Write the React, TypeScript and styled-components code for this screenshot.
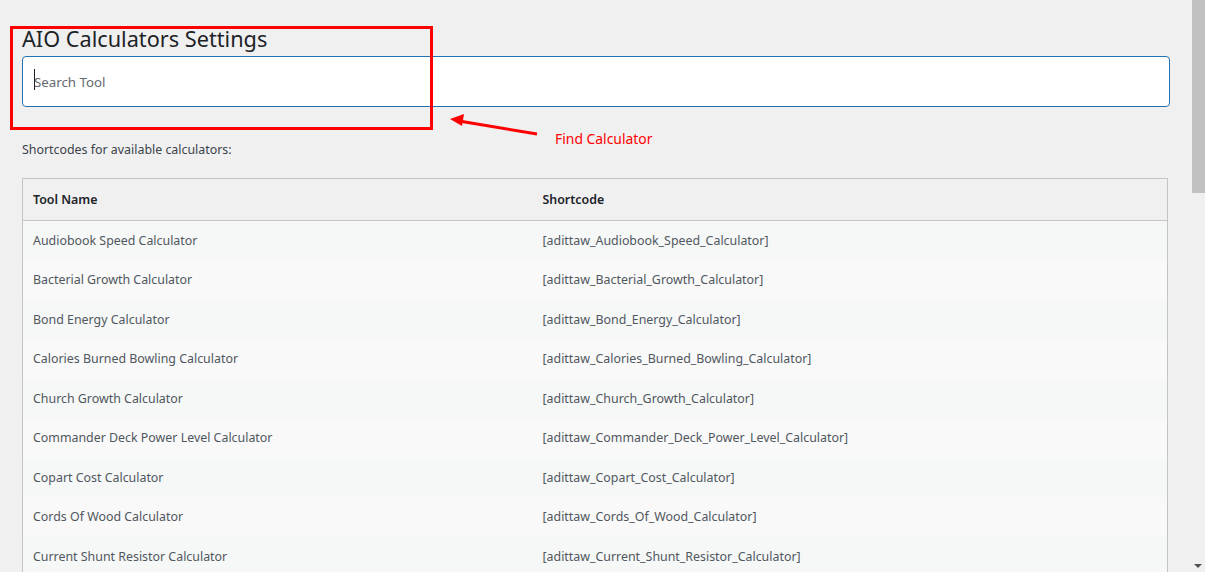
import React from "react";
import styled, { createGlobalStyle } from "styled-components";

const Global = createGlobalStyle`
  html, body { margin: 0; padding: 0; background: #f0f0f1; }
  body { font-family: "Noto Sans", "Open Sans", sans-serif; color: #3c434a; }
  * { box-sizing: border-box; }
`;

const Frame = styled.div`
  display: flex;
  width: 1205px;
  height: 572px;
  overflow: hidden;
  background: #f0f0f1;
`;

const Main = styled.div`
  position: relative;
  flex: 1;
  padding: 24px 20px 0 22px;
`;

const Title = styled.h1`
  margin: 0;
  font-size: 21.7px;
  font-weight: 400;
  line-height: 29px;
  color: #1d2327;
`;

const SearchWrap = styled.div`
  position: relative;
  margin-top: 3px;
`;

const Search = styled.input`
  display: block;
  height: 51px;
  width: 100%;
  border: 1px solid #2271b1;
  border-radius: 4px;
  background: #fff;
  padding: 0 11px;
  font-family: inherit;
  font-size: 13.3px;
  color: #2c3338;
  outline: none;
  caret-color: #1d2327;
  &::placeholder { color: #646970; }
`;

const Caret = styled.span`
  position: absolute;
  left: 12px;
  top: 13px;
  width: 1px;
  height: 21px;
  background: #1d2327;
  pointer-events: none;
`;

const Note = styled.p`
  margin: 33px 0 0;
  font-size: 12.4px;
  line-height: 20px;
  color: #3c434a;
`;

const Table = styled.table`
  margin-top: 18px;
  width: calc(100% - 2px);
  border-collapse: collapse;
  border: 1px solid #c3c4c7;
  font-size: 12.4px;
`;

const HeadCell = styled.th<{ $w?: string }>`
  text-align: left;
  font-weight: 600;
  color: #1d2327;
  background: #f0f0f1;
  height: 42px;
  padding: 0 10px;
  border-bottom: 1px solid #c3c4c7;
  width: ${(p) => p.$w || "auto"};
`;

const Row = styled.tr<{ $odd: boolean }>`
  background: ${(p) => (p.$odd ? "#f6f7f7" : "#f9f9f9")};
`;

const Cell = styled.td`
  height: 39.5px;
  padding: 0 10px;
  color: #50575e;
`;

const Highlight = styled.div`
  position: absolute;
  left: 10px;
  top: 26px;
  width: 423px;
  height: 104px;
  border: 3px solid #ff0000;
  pointer-events: none;
`;

const Arrow = styled.svg`
  position: absolute;
  left: 440px;
  top: 110px;
  pointer-events: none;
`;

const Callout = styled.span`
  position: absolute;
  left: 555px;
  top: 129px;
  font-size: 13.9px;
  line-height: 20px;
  color: #ff0000;
`;

const ScrollTrack = styled.div`
  width: 15px;
  height: 572px;
  background: #f0f0f0;
  display: flex;
  flex-direction: column;
  align-items: center;
  padding-left: 1px;
`;

const Thumb = styled.div`
  width: 13px;
  height: 193px;
  flex-shrink: 0;
  background: #c1c1c1;
`;

const Spacer = styled.div`
  flex: 1;
`;

const DownArrow = styled.div`
  width: 0;
  height: 0;
  border-left: 4px solid transparent;
  border-right: 4px solid transparent;
  border-top: 4px solid #505050;
  margin-bottom: 4px;
`;

const tools = [
  "Audiobook Speed Calculator",
  "Bacterial Growth Calculator",
  "Bond Energy Calculator",
  "Calories Burned Bowling Calculator",
  "Church Growth Calculator",
  "Commander Deck Power Level Calculator",
  "Copart Cost Calculator",
  "Cords Of Wood Calculator",
  "Current Shunt Resistor Calculator",
];

export default function App() {
  return (
    <Frame>
      <Global />
      <Main>
        <Title>AIO Calculators Settings</Title>
        <SearchWrap>
          <Search placeholder="Search Tool" />
          <Caret />
        </SearchWrap>
        <Note>Shortcodes for available calculators:</Note>
        <Table>
          <thead>
            <tr>
              <HeadCell $w="510px">Tool Name</HeadCell>
              <HeadCell>Shortcode</HeadCell>
            </tr>
          </thead>
          <tbody>
            {tools.map((t, i) => (
              <Row key={t} $odd={i % 2 === 0}>
                <Cell>{t}</Cell>
                <Cell>[adittaw_{t.replace(/ /g, "_")}]</Cell>
              </Row>
            ))}
          </tbody>
        </Table>
        <Highlight />
        <Arrow width="110" height="35" viewBox="0 0 110 35">
          <line x1="97" y1="24" x2="22" y2="11.5" stroke="#ff0000" strokeWidth="3" />
          <polygon points="10,9 24,4 22,16" fill="#ff0000" />
        </Arrow>
        <Callout>Find Calculator</Callout>
      </Main>
      <ScrollTrack>
        <Thumb />
        <Spacer />
        <DownArrow />
      </ScrollTrack>
    </Frame>
  );
}
